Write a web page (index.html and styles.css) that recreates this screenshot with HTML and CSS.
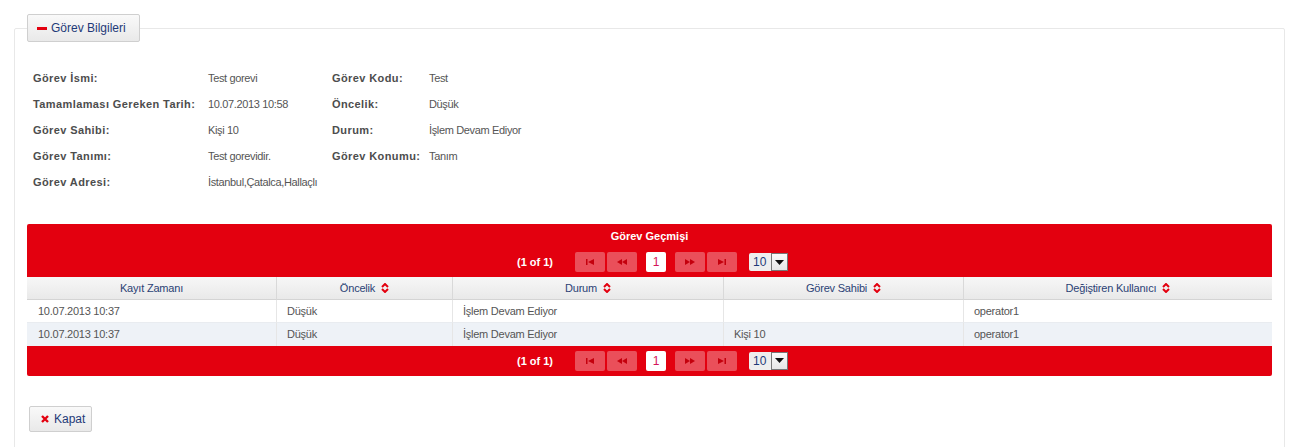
FILE: index.html
```html
<!DOCTYPE html>
<html lang="tr">
<head>
<meta charset="utf-8">
<title>Görev Bilgileri</title>
<link rel="stylesheet" href="styles.css">
</head>
<body>
<fieldset class="panel">
  <legend class="legend-btn"><span class="minus"></span>Görev Bilgileri</legend>

  <div class="info">
    <div class="lbl">Görev İsmi:</div><div class="val">Test gorevi</div>
    <div class="lbl">Görev Kodu:</div><div class="val">Test</div>
    <div class="lbl">Tamamlaması Gereken Tarih:</div><div class="val">10.07.2013 10:58</div>
    <div class="lbl">Öncelik:</div><div class="val">Düşük</div>
    <div class="lbl">Görev Sahibi:</div><div class="val">Kişi 10</div>
    <div class="lbl">Durum:</div><div class="val">İşlem Devam Ediyor</div>
    <div class="lbl">Görev Tanımı:</div><div class="val">Test gorevidir.</div>
    <div class="lbl">Görev Konumu:</div><div class="val">Tanım</div>
    <div class="lbl">Görev Adresi:</div><div class="val">İstanbul,Çatalca,Hallaçlı</div>
  </div>

  <div class="dt">
    <div class="dt-title">Görev Geçmişi</div>
    <div class="pager pager-top">
      <span class="pg-text">(1 of 1)</span>
      <span class="pg-btn first"><svg width="10" height="6" viewBox="0 0 10 6"><rect x="1" y="0" width="1.5" height="6"/><polygon points="9,0 9,6 3,3"/></svg></span>
      <span class="pg-btn prev"><svg width="10" height="6" viewBox="0 0 10 6"><polygon points="5,0 5,6 0,3"/><polygon points="10,0 10,6 5,3"/></svg></span>
      <span class="pg-page">1</span>
      <span class="pg-btn next"><svg width="10" height="6" viewBox="0 0 10 6"><polygon points="0,0 0,6 5,3"/><polygon points="5,0 5,6 10,3"/></svg></span>
      <span class="pg-btn last"><svg width="10" height="6" viewBox="0 0 10 6"><polygon points="1,0 1,6 7,3"/><rect x="7.5" y="0" width="1.5" height="6"/></svg></span>
      <span class="pg-select"><span class="sel-val">10</span><span class="sel-arrow"><svg width="9" height="5" viewBox="0 0 9 5"><polygon points="0,0 9,0 4.5,5"/></svg></span></span>
    </div>
    <div class="grid">
      <div class="hd c1">Kayıt Zamanı</div>
      <div class="hd c2">Öncelik <svg class="sort" width="8" height="10" viewBox="0 0 8 10"><polyline points="1,4 4,1 7,4"/><polyline points="1,6 4,9 7,6"/></svg></div>
      <div class="hd c3">Durum <svg class="sort" width="8" height="10" viewBox="0 0 8 10"><polyline points="1,4 4,1 7,4"/><polyline points="1,6 4,9 7,6"/></svg></div>
      <div class="hd c4">Görev Sahibi <svg class="sort" width="8" height="10" viewBox="0 0 8 10"><polyline points="1,4 4,1 7,4"/><polyline points="1,6 4,9 7,6"/></svg></div>
      <div class="hd c5">Değiştiren Kullanıcı <svg class="sort" width="8" height="10" viewBox="0 0 8 10"><polyline points="1,4 4,1 7,4"/><polyline points="1,6 4,9 7,6"/></svg></div>

      <div class="cell first">10.07.2013 10:37</div>
      <div class="cell">Düşük</div>
      <div class="cell">İşlem Devam Ediyor</div>
      <div class="cell"></div>
      <div class="cell last">operator1</div>

      <div class="cell alt first">10.07.2013 10:37</div>
      <div class="cell alt">Düşük</div>
      <div class="cell alt">İşlem Devam Ediyor</div>
      <div class="cell alt">Kişi 10</div>
      <div class="cell alt last">operator1</div>
    </div>
    <div class="pager pager-bottom">
      <span class="pg-text">(1 of 1)</span>
      <span class="pg-btn first"><svg width="10" height="6" viewBox="0 0 10 6"><rect x="1" y="0" width="1.5" height="6"/><polygon points="9,0 9,6 3,3"/></svg></span>
      <span class="pg-btn prev"><svg width="10" height="6" viewBox="0 0 10 6"><polygon points="5,0 5,6 0,3"/><polygon points="10,0 10,6 5,3"/></svg></span>
      <span class="pg-page">1</span>
      <span class="pg-btn next"><svg width="10" height="6" viewBox="0 0 10 6"><polygon points="0,0 0,6 5,3"/><polygon points="5,0 5,6 10,3"/></svg></span>
      <span class="pg-btn last"><svg width="10" height="6" viewBox="0 0 10 6"><polygon points="1,0 1,6 7,3"/><rect x="7.5" y="0" width="1.5" height="6"/></svg></span>
      <span class="pg-select"><span class="sel-val">10</span><span class="sel-arrow"><svg width="9" height="5" viewBox="0 0 9 5"><polygon points="0,0 9,0 4.5,5"/></svg></span></span>
    </div>
  </div>

  <button class="btn-close"><svg width="8" height="8" viewBox="0 0 8 8"><path d="M1 1 L7 7 M7 1 L1 7"/></svg>Kapat</button>
</fieldset>
</body>
</html>
```

FILE: styles.css
```css
* { box-sizing: border-box; }
html, body { margin: 0; padding: 0; background: #fff; }
body {
  font-family: "Liberation Sans", Arial, sans-serif;
  font-size: 11px;
  color: #555;
  padding-top: 14px;
}

.panel {
  margin: 0 29px 0 14px;
  border: 1px solid #e8e8e8;
  border-radius: 2px;
  padding: 23px 12px 30px 12px;
  min-height: 440px;
}

.legend-btn {
  display: flex;
  align-items: center;
  height: 28px;
  padding: 0 12px 0 9px;
  border: 1px solid #cfcfcf;
  border-radius: 2px;
  background: linear-gradient(#f9f9f9, #e9e9e9);
  color: #1f3a78;
  font-size: 12px;
  width: 113px;
}
.minus {
  display: inline-block;
  width: 10px;
  height: 3px;
  background: #e3000f;
  margin-right: 4px;
}

.info {
  display: grid;
  grid-template-columns: 175px 124px 97px 1fr;
  grid-auto-rows: 26px;
  align-items: center;
  padding-left: 6px;
}
.lbl { font-weight: bold; color: #4d4d4d; letter-spacing: 0.4px; }
.val { color: #555; letter-spacing: -0.35px; }

.dt {
  margin-top: 29px;
  background: #e3000f;
  border-radius: 2px;
}
.dt-title {
  height: 24px;
  line-height: 25px;
  text-align: center;
  color: #fff;
  font-weight: bold;
}
.pager {
  display: flex;
  align-items: center;
  justify-content: center;
  padding-left: 6px;
}
.pager-top { height: 29px; padding-bottom: 1px; }
.pager-bottom { height: 30px; padding-bottom: 1px; }
.pg-text {
  color: #fff;
  font-weight: bold;
  margin-right: 22px;
}
.pg-btn {
  display: inline-flex;
  align-items: center;
  justify-content: center;
  width: 30px;
  height: 20px;
  border-radius: 2px;
  background: #ea4f5a;
  margin-right: 2px;
}
.pg-btn svg { fill: #c4000d; }
.pg-btn.prev { margin-right: 9px; }
.pg-btn.last { margin-right: 12px; }
.pg-page {
  display: inline-flex;
  align-items: center;
  justify-content: center;
  width: 20px;
  height: 20px;
  background: #fff;
  border-radius: 2px;
  color: #d4145a;
  font-size: 12px;
  margin-right: 9px;
}
.pg-select {
  display: inline-flex;
  height: 18px;
  background: #eee;
  border-radius: 2px;
}
.sel-val {
  width: 22px;
  line-height: 18px;
  padding-left: 4px;
  color: #1f3a78;
  font-size: 12px;
}
.sel-arrow {
  width: 17px;
  height: 18px;
  border: 1px solid #777;
  background: linear-gradient(#fafafa, #e6e6e6);
  display: inline-flex;
  align-items: center;
  justify-content: center;
}
.sel-arrow svg { fill: #111; }

.grid {
  display: grid;
  grid-template-columns: 250px 176px 271px 240px 308px;
  background: #fff;
}
.hd {
  height: 23px;
  display: flex;
  align-items: center;
  justify-content: center;
  gap: 6px;
  background: linear-gradient(#f7f7f7, #e9e9e9);
  border-right: 1px solid #d9d9d9;
  border-bottom: 1px solid #d4d4d4;
  color: #2b4275;
  letter-spacing: -0.2px;
}
.hd.c5 { border-right: 0; }
.sort polyline {
  fill: none;
  stroke: #e3000f;
  stroke-width: 2;
}
.cell {
  height: 23px;
  line-height: 23px;
  padding-left: 10px;
  color: #555;
  letter-spacing: -0.25px;
  border-right: 1px solid #e6e6e6;
  border-bottom: 1px solid #e9ecf0;
  white-space: nowrap;
}
.cell.first { padding-left: 11px; }
.cell.last { border-right: 0; }
.cell.alt { background: #eef2f7; border-bottom: 0; }

.btn-close {
  display: flex;
  align-items: center;
  margin: 30px 0 0 2px;
  height: 26px;
  width: 63px;
  padding: 0 0 0 11px;
  border: 1px solid #cfcfcf;
  border-radius: 2px;
  background: linear-gradient(#f9f9f9, #e9e9e9);
  color: #1f3a78;
  font-family: "Liberation Sans", Arial, sans-serif;
  font-size: 12px;
}
.btn-close svg { margin-right: 5px; }
.btn-close svg path { stroke: #e3000f; stroke-width: 2.4; }
```
